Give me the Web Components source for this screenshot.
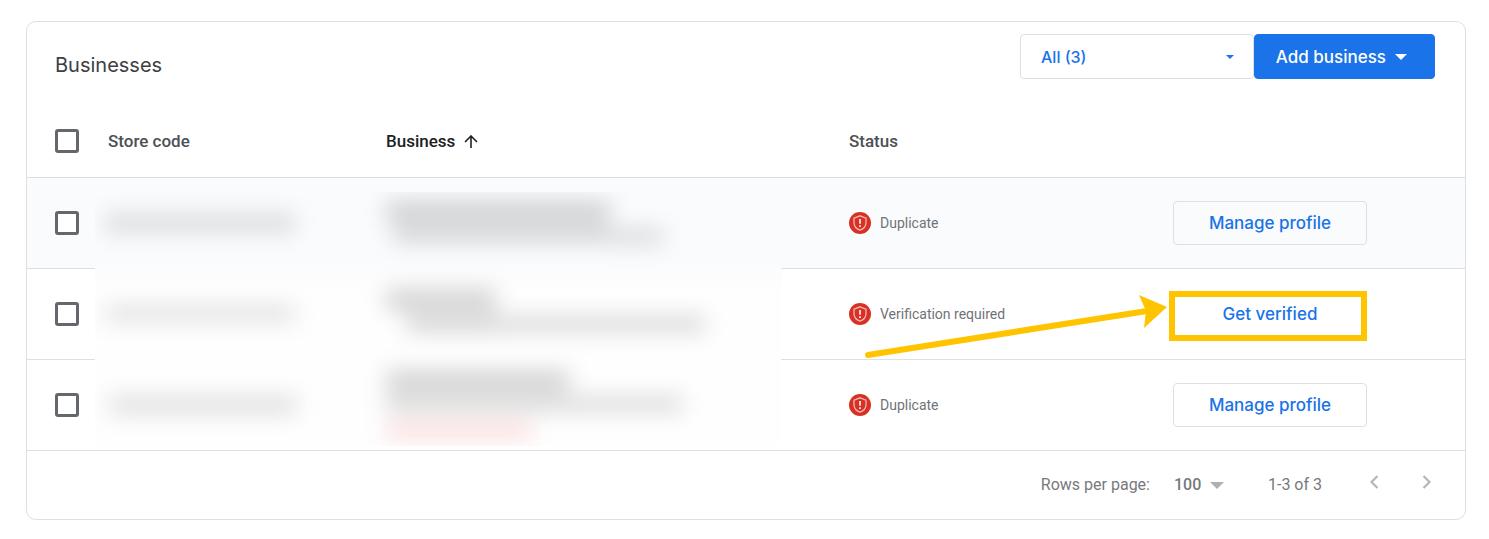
<!DOCTYPE html>
<html lang="en">
<head>
<meta charset="utf-8">
<title>Businesses</title>
<style>
body {
  margin: 21px 23px 19px 26px;
  background: #fff;
  color: #3c4043;
  font-family: Roboto, "Liberation Sans", sans-serif;
  --line: #dddfe2;
  --blue: #1a73e8;
  --display: Inter, "Open Sans", sans-serif;
}
</style>
</head>
<body>

<business-panel>
  <span slot="title">Businesses</span>
  <drop-down slot="actions" label="Filter businesses" options="All (3)"></drop-down>
  <action-button slot="actions" primary>Add business</action-button>
  <business-table></business-table>
  <table-pager slot="footer" size="100" range="1-3 of 3"></table-pager>
</business-panel>

<script>
function define(name, html, setup) {
  customElements.define(name, class extends HTMLElement {
    constructor() {
      super();
      this.attachShadow({ mode: 'open' });
      this.shadowRoot.innerHTML = html;
    }

    connectedCallback() {
      if (setup) setup(this, this.shadowRoot);
    }
  });
}

define('business-panel', `
<style>
:host {
  display: block;
  border: 1px solid var(--line);
  border-radius: 10px;
  overflow: hidden;
}
header {
  display: flex;
  justify-content: space-between;
  padding: 12px 30px 25px 28px;
}
h1 {
  margin: 0;
  padding-top: 18px;
  font: 400 20px/26px var(--display);
  color: #3c4043;
}
.actions {
  display: flex;
}
</style>
<header>
  <h1><slot name="title"></slot></h1>
  <div class="actions"><slot name="actions"></slot></div>
</header>
<slot></slot>
<slot name="footer"></slot>
`);

define('drop-down', `
<style>
:host {
  display: grid;
  width: 234px;
  height: 45px;
  color: var(--blue);
}
select, svg {
  grid-area: 1 / 1;
}
select {
  appearance: none;
  width: 100%;
  padding: 0 20px;
  border: 1px solid var(--line);
  border-radius: 4px;
  background: none;
  color: inherit;
  font: 500 16px/20px var(--display);
}
svg {
  place-self: center end;
  margin-right: 20px;
  pointer-events: none;
}
</style>
<select></select>
<svg width="8" height="4" viewBox="0 0 8 4"><path d="M0 0h8L4 4z" fill="currentColor"/></svg>
`, (host, root) => {
  const select = root.querySelector('select');
  select.setAttribute('aria-label', host.getAttribute('label'));
  select.replaceChildren(...host.getAttribute('options').split(',').map(text => new Option(text)));
});

define('action-button', `
<style>
:host {
  display: block;
}
button {
  display: flex;
  align-items: center;
  justify-content: center;
  gap: 9px;
  width: 194px;
  height: 44px;
  padding: 0;
  border: 1px solid var(--line);
  border-radius: 4px;
  background: none;
  color: var(--blue);
  font: 500 17px/20px var(--display);
}
svg {
  display: none;
}
:host([primary]) button {
  justify-content: flex-end;
  width: 181px;
  height: 45px;
  padding-right: 27px;
  border-color: var(--blue);
  background: var(--blue);
  color: #fff;
}
:host([primary]) svg {
  display: block;
}
</style>
<button type="button">
  <slot></slot>
  <svg width="12" height="6" viewBox="0 0 12 6"><path d="M0 0h12L6 6z" fill="currentColor"/></svg>
</button>
`);

define('check-box', `
<style>
:host {
  display: block;
}
input {
  display: block;
  appearance: none;
  width: 24px;
  height: 24px;
  margin: 0;
  border: 3px solid #64676b;
  border-radius: 3px;
  background: #fff;
}
</style>
<input type="checkbox">
`, (host, root) => {
  root.querySelector('input').setAttribute('aria-label', host.getAttribute('label'));
});

define('status-alert', `
<style>
:host {
  display: flex;
  align-items: center;
  gap: 9px;
  color: #707377;
  font-size: 14px;
  line-height: 20px;
}
</style>
<svg width="22" height="22" viewBox="0 0 22 22">
  <circle cx="11" cy="11" r="11" fill="#d93025"/>
  <path d="M11 3.8l6 2.3v4.5c0 3.7-2.4 6.4-6 7.6-3.6-1.2-6-3.9-6-7.6V6.1z" fill="none" stroke="#f2b8b3" stroke-width="1.3"/>
  <path d="M11 7v4.8M11 13.2V15" stroke="#fbe4e2" stroke-width="1.8"/>
</svg>
<slot></slot>
`);

// blurred out store codes, names and addresses
define('redacted-area', `
<style>
:host, svg {
  display: block;
}
svg {
  width: 100%;
  height: 100%;
}
</style>
<svg viewBox="0 0 686 254" preserveAspectRatio="none" aria-hidden="true">
  <defs>
    <filter id="soft" filterUnits="userSpaceOnUse" x="-60" y="-60" width="806" height="374" color-interpolation-filters="sRGB">
      <feGaussianBlur stdDeviation="11"/>
    </filter>
    <linearGradient id="edge" x2="0" y2="1">
      <stop offset="0.27" stop-color="#fafbfd"/>
      <stop offset="0.32" stop-color="#fcfcfd"/>
      <stop offset="0.4" stop-color="#fefefe"/>
    </linearGradient>
  </defs>
  <rect width="686" height="254" fill="url(#edge)"/>
  <g filter="url(#soft)">
    <g fill="#000" fill-opacity="0.13">
      <rect x="10" y="22" width="190" height="18"/>
      <rect x="10" y="113" width="190" height="17" fill-opacity="0.11"/>
      <rect x="14" y="204" width="188" height="18" fill-opacity="0.12"/>
    </g>
    <g fill="#000" fill-opacity="0.19">
      <rect x="291" y="10" width="224" height="18"/>
      <rect x="298" y="35" width="214" height="14"/>
      <rect x="512" y="37" width="56" height="15" fill-opacity="0.14"/>
      <rect x="291" y="98" width="110" height="19"/>
      <rect x="312" y="124" width="88" height="15"/>
      <rect x="400" y="124" width="210" height="16" fill-opacity="0.15"/>
      <rect x="291" y="179" width="183" height="18"/>
      <rect x="291" y="203" width="178" height="15" fill-opacity="0.17"/>
      <rect x="469" y="204" width="118" height="16" fill-opacity="0.14"/>
    </g>
    <rect x="291" y="230" width="146" height="16" fill="#e81818" fill-opacity="0.15"/>
  </g>
</svg>
`);

define('callout-arrow', `
<style>
:host, svg {
  display: block;
}
</style>
<svg width="504" height="72" viewBox="0 0 504 72" fill="none" stroke="#ffc400" stroke-width="6" aria-hidden="true">
  <rect x="309" y="5" width="192" height="44"/>
  <path d="M5 66L284 22" stroke-linecap="round"/>
  <path d="M304 18L276 6l7 16-2 17z" fill="#ffc400" stroke="none"/>
</svg>
`);

define('business-table', `
<style>
:host {
  display: block;
  position: relative;
}
table {
  width: 100%;
  table-layout: fixed;
  border-collapse: separate;
  border-spacing: 0;
}
th, td {
  box-sizing: border-box;
  height: 91px;
  padding: 0;
  border-bottom: 1px solid var(--line);
  text-align: left;
  vertical-align: middle;
}
thead th, thead td {
  height: 74px;
  font-size: 17px;
  font-weight: 500;
  line-height: 20px;
  color: #4d5054;
}
tbody tr:first-child {
  background: #fafbfd;
}
.select {
  width: 81px;
}
.code {
  width: 278px;
}
.status {
  width: 324px;
}
.action {
  width: 292px;
}
check-box {
  padding-left: 28px;
}
thead .sorted {
  color: #202124;
}
.sorted svg {
  margin-left: 4px;
  vertical-align: -1px;
}
redacted-area {
  position: absolute;
  inset: 88px 684px auto 68px;
  height: 254px;
}
callout-arrow {
  position: absolute;
  top: 185px;
  right: 98px;
  pointer-events: none;
}
</style>
<table>
  <thead>
    <tr>
      <th class="select"><check-box label="Select all"></check-box></th>
      <th class="code">Store code</th>
      <th class="sorted" aria-sort="ascending">Business
        <svg width="14" height="13" viewBox="0 0 14 13" fill="none" stroke="currentColor" stroke-width="1.6"><path d="M7 13V1.5M1 7l6-6 6 6"/></svg>
      </th>
      <th class="status">Status</th>
      <td class="action"></td>
    </tr>
  </thead>
  <tbody></tbody>
</table>
<redacted-area></redacted-area>
<callout-arrow></callout-arrow>
`, (host, root) => {
  const rows = [
    { status: 'Duplicate', action: 'Manage profile' },
    { status: 'Verification required', action: 'Get verified' },
    { status: 'Duplicate', action: 'Manage profile' }
  ];
  root.querySelector('tbody').innerHTML = rows.map((row, i) => `
    <tr>
      <td><check-box label="Select row ${i + 1}"></check-box></td>
      <td></td>
      <td></td>
      <td><status-alert>${row.status}</status-alert></td>
      <td><action-button>${row.action}</action-button></td>
    </tr>`).join('');
});

define('table-pager', `
<style>
:host {
  display: flex;
  align-items: center;
  justify-content: flex-end;
  height: 68px;
  padding-right: 26px;
  color: #77797c;
  font-size: 16px;
  line-height: 20px;
}
.size {
  display: grid;
  width: 50px;
  margin: 0 44px 0 24px;
}
select, .size svg {
  grid-area: 1 / 1;
}
select {
  appearance: none;
  width: 100%;
  padding: 0;
  border: 0;
  background: none;
  color: inherit;
  font: 500 16px/20px Roboto, sans-serif;
}
.size svg {
  place-self: center end;
  pointer-events: none;
}
nav {
  display: flex;
  gap: 29px;
  margin-left: 40px;
  padding-bottom: 6px;
}
button {
  width: 24px;
  height: 24px;
  padding: 0;
  border: 0;
  background: none;
  color: #b4b6b8;
}
button svg {
  display: block;
}
</style>
<label for="size">Rows per page:</label>
<span class="size">
  <select id="size"></select>
  <svg width="14" height="7" viewBox="0 0 14 7"><path d="M0 0h14L7 7z" fill="#aeb0b3"/></svg>
</span>
<span class="range"></span>
<nav>
  <button type="button" aria-label="Previous page">
    <svg width="24" height="24" viewBox="0 0 24 24" fill="none" stroke="currentColor" stroke-width="2.2"><path d="M15.5 6l-6 6 6 6"/></svg>
  </button>
  <button type="button" aria-label="Next page">
    <svg width="24" height="24" viewBox="0 0 24 24" fill="none" stroke="currentColor" stroke-width="2.2"><path d="M8.5 6l6 6-6 6"/></svg>
  </button>
</nav>
`, (host, root) => {
  root.querySelector('select').replaceChildren(new Option(host.getAttribute('size')));
  root.querySelector('.range').textContent = host.getAttribute('range');
});
</script>
</body>
</html>
